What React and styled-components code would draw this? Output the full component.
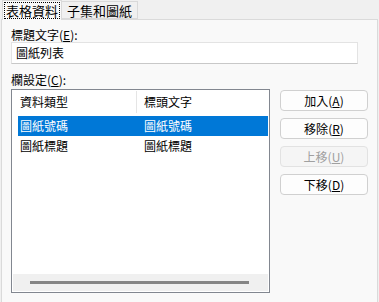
import React from "react";
import styled, { createGlobalStyle } from "styled-components";

const GlobalStyle = createGlobalStyle`
  html, body {
    margin: 0;
    padding: 0;
    background: #f0f0f0;
  }
  body {
    font-family: "Noto Sans CJK TC", "Liberation Sans", sans-serif;
    font-size: 12px;
    color: #000;
  }
`;

const Window = styled.div`
  width: 379px;
  height: 302px;
  display: flex;
  flex-direction: column;
  box-sizing: border-box;
`;

const TabStrip = styled.div`
  display: flex;
  align-items: flex-end;
  height: 21px;
  padding-left: 2px;
`;

const Tab = styled.div`
  box-sizing: border-box;
  height: ${(p) => (p.active ? "20px" : "18px")};
  padding: 0 ${(p) => (p.active ? "2px" : "4px")};
  margin-bottom: ${(p) => (p.active ? "-1px" : "0")};
  background: ${(p) => (p.active ? "#f9f9f9" : "#f0f0f0")};
  border: 1px solid #d9d9d9;
  border-bottom: ${(p) => (p.active ? "none" : "1px solid #d9d9d9")};
  border-left: ${(p) => (p.first ? "1px solid #d9d9d9" : "none")};
  font-size: 13px;
  line-height: 16px;
  display: flex;
  align-items: center;
  position: relative;
  z-index: ${(p) => (p.active ? 1 : 0)};
`;

const TabText = styled.span`
  outline: ${(p) => (p.focus ? "1px dotted #000" : "none")};
  outline-offset: 0;
  padding: 0 1px;
  line-height: 15px;
`;

const Panel = styled.div`
  flex: 1;
  margin: 0 1px 1px 1px;
  border: 1px solid #dadada;
  background: #f9f9f9;
  padding: 7px 9px 9px 9px;
  display: flex;
  flex-direction: column;
`;

const Label = styled.div`
  height: 15px;
  line-height: 15px;
  font-size: 12px;
  color: #000;
`;

const Key = styled.span`
  text-decoration: underline;
`;

const TextInput = styled.div`
  box-sizing: border-box;
  width: 347px;
  height: 22px;
  margin: 0 0 8px 0;
  border: 1px solid #e3e3e3;
  border-bottom-color: #c8c8c8;
  background: #fff;
  padding: 0 4px;
  line-height: 20px;
  font-size: 12px;
`;

const Body = styled.div`
  display: flex;
  gap: 10px;
  margin-top: 2px;
`;

const ListView = styled.div`
  box-sizing: border-box;
  width: 263px;
  height: 204px;
  border: 1px solid #828790;
  background: #fff;
  display: flex;
  flex-direction: column;
  padding: 1px;
`;

const HeaderRow = styled.div`
  display: grid;
  grid-template-columns: 124px 1fr;
  height: 22px;
  margin-bottom: 3px;
`;

const HeaderCell = styled.div`
  padding-left: 7px;
  line-height: 22px;
  border-right: ${(p) => (p.divider ? "1px solid #e5e5e5" : "none")};
`;

const Rows = styled.div`
  flex: 1;
`;

const Row = styled.div`
  display: grid;
  grid-template-columns: 124px 1fr;
  height: 20px;
  margin-left: 5px;
  background: ${(p) => (p.selected ? "#0078d7" : "transparent")};
  color: ${(p) => (p.selected ? "#fff" : "#000")};
`;

const Cell = styled.div`
  padding-left: 2px;
  line-height: 19px;
`;

const HScroll = styled.div`
  height: 17px;
  background: #f0f0f0;
  display: flex;
  align-items: center;
  padding: 0 19px 0 17px;
`;

const Thumb = styled.div`
  flex: 1;
  height: 3px;
  background: #858585;
`;

const Buttons = styled.div`
  display: flex;
  flex-direction: column;
  gap: 7px;
  padding-top: 1px;
`;

const Button = styled.div`
  box-sizing: border-box;
  width: 88px;
  height: 21px;
  border: 1px solid ${(p) => (p.disabled ? "#e2e2e2" : "#d0d0d0")};
  border-radius: 4px;
  background: ${(p) => (p.disabled ? "#f5f5f5" : "#fdfdfd")};
  color: ${(p) => (p.disabled ? "#a0a0a0" : "#000")};
  text-align: center;
  line-height: 19px;
  font-size: 12px;
`;

const columns = [
  { type: "圖紙號碼", title: "圖紙號碼", selected: true },
  { type: "圖紙標題", title: "圖紙標題" },
];

const buttons = [
  { label: "加入", key: "A" },
  { label: "移除", key: "R" },
  { label: "上移", key: "U", disabled: true },
  { label: "下移", key: "D" },
];

export default function App() {
  return (
    <Window>
      <GlobalStyle />
      <TabStrip>
        <Tab active first>
          <TabText focus>表格資料</TabText>
        </Tab>
        <Tab>
          <TabText>子集和圖紙</TabText>
        </Tab>
      </TabStrip>
      <Panel>
        <Label>
          標題文字(<Key>E</Key>):
        </Label>
        <TextInput>圖紙列表</TextInput>
        <Label>
          欄設定(<Key>C</Key>):
        </Label>
        <Body>
          <ListView>
            <HeaderRow>
              <HeaderCell divider>資料類型</HeaderCell>
              <HeaderCell>標頭文字</HeaderCell>
            </HeaderRow>
            <Rows>
              {columns.map((c) => (
                <Row key={c.type} selected={c.selected}>
                  <Cell>{c.type}</Cell>
                  <Cell>{c.title}</Cell>
                </Row>
              ))}
            </Rows>
            <HScroll>
              <Thumb />
            </HScroll>
          </ListView>
          <Buttons>
            {buttons.map((b) => (
              <Button key={b.key} disabled={b.disabled}>
                {b.label}(<Key>{b.key}</Key>)
              </Button>
            ))}
          </Buttons>
        </Body>
      </Panel>
    </Window>
  );
}
